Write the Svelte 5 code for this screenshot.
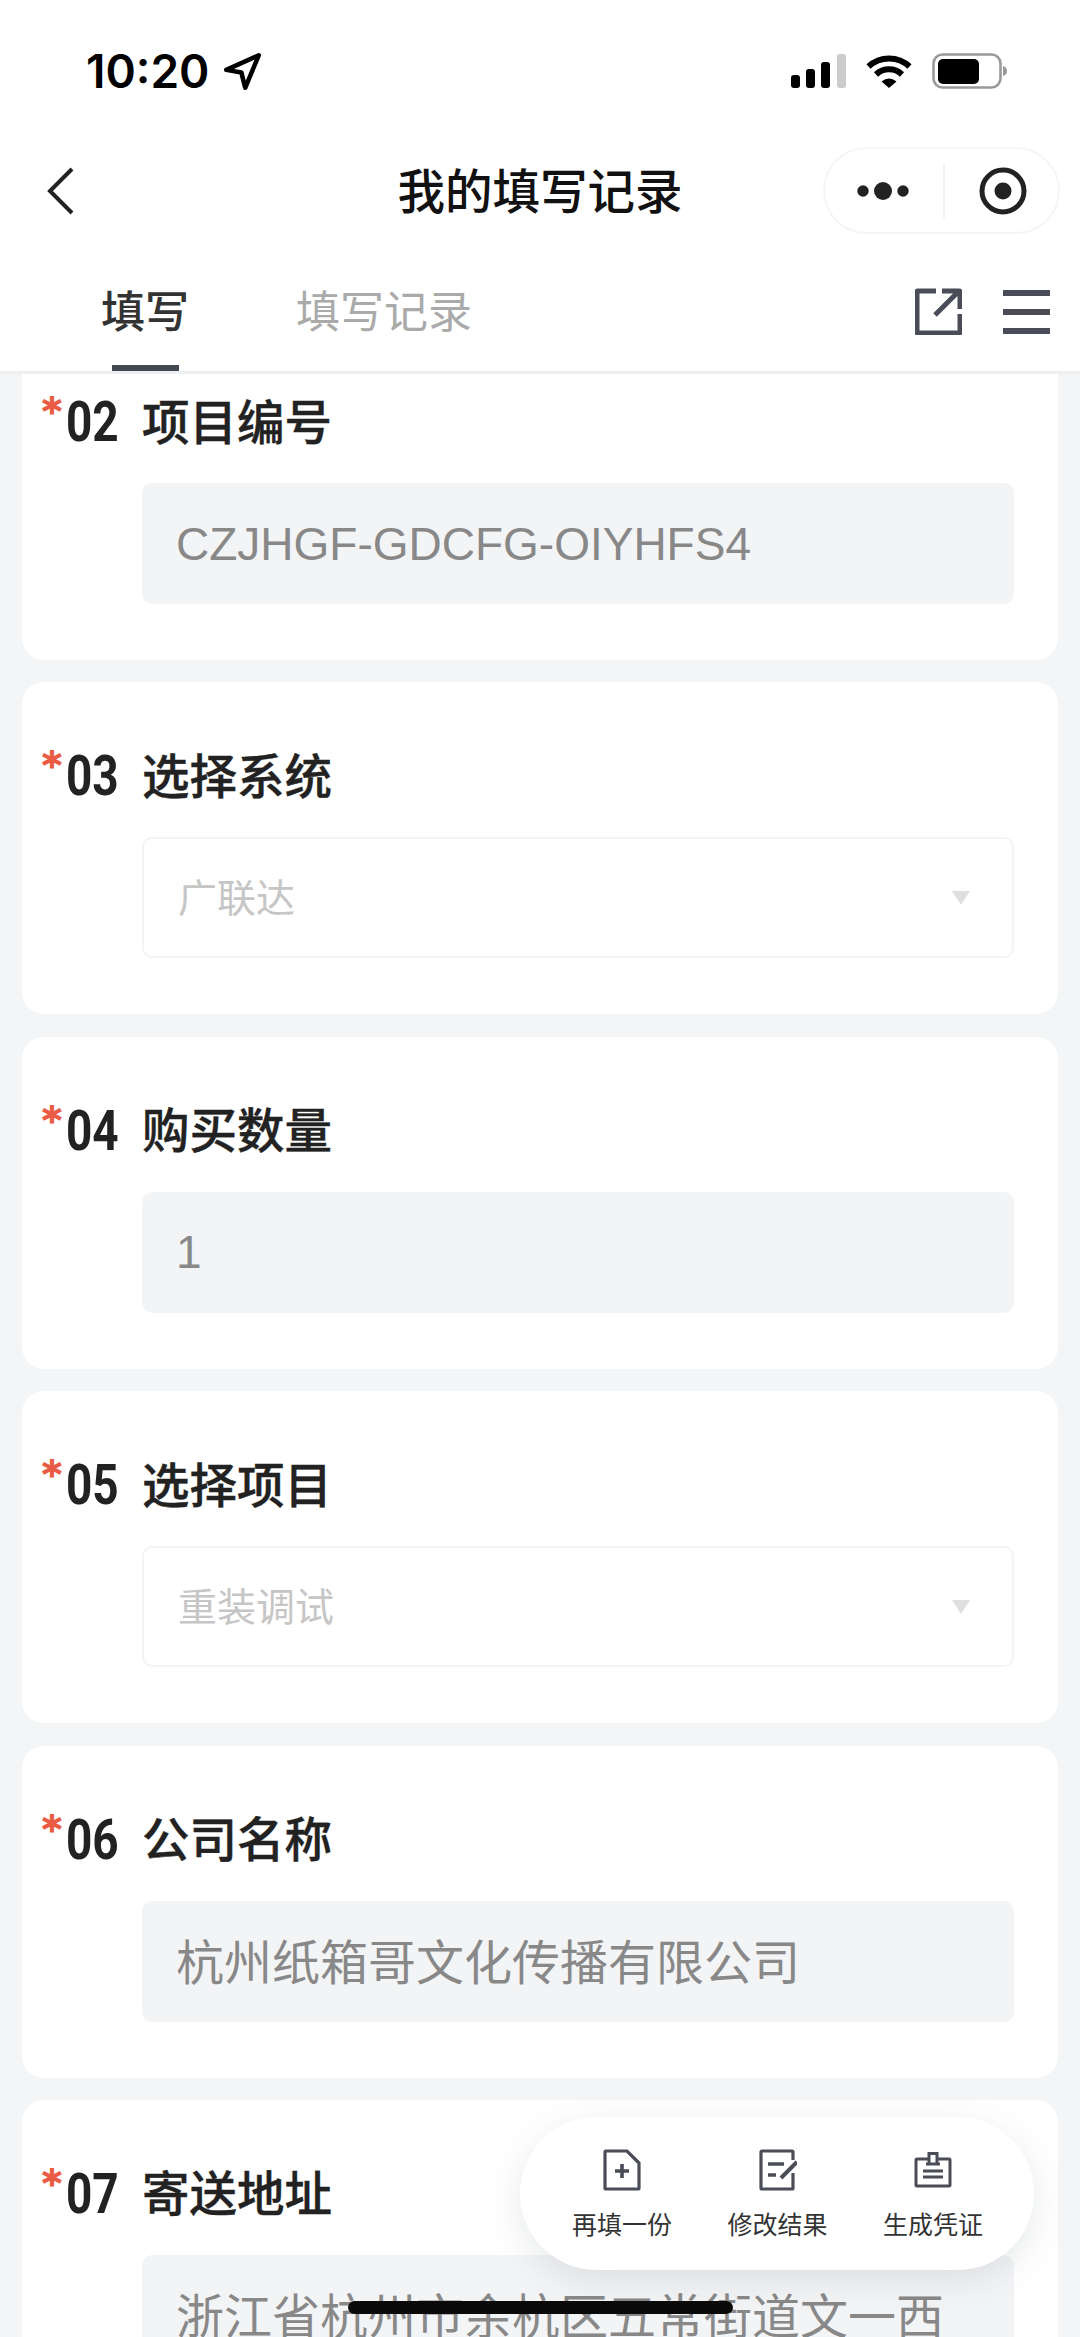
<script>
  const fields = [
    { no: '02', label: '项目编号', value: 'CZJHGF-GDCFG-OIYHFS4', type: 'input', latin: true },
    { no: '03', label: '选择系统', value: '广联达', type: 'select' },
    { no: '04', label: '购买数量', value: '1', type: 'input', latin: true },
    { no: '05', label: '选择项目', value: '重装调试', type: 'select' },
    { no: '06', label: '公司名称', value: '杭州纸箱哥文化传播有限公司', type: 'input' },
    { no: '07', label: '寄送地址', value: '浙江省杭州市余杭区五常街道文一西', type: 'input' }
  ];
</script>

<div class="page">
  <header class="top">
    <div class="status">
      <div class="time">
        <span>10:20</span>
        <svg width="39" height="39" viewBox="0 0 36 36" fill="none"><path d="M33 3 3 16.500l14 2.500 3.500 14z" stroke="#000" stroke-width="4.200" stroke-linejoin="round"/></svg>
      </div>
      <div class="sys">
        <svg width="55" height="34" viewBox="0 0 55 34"><rect x="0" y="21" width="9" height="13" rx="3"/><rect x="15" y="15" width="9" height="19" rx="3"/><rect x="30" y="8" width="9" height="26" rx="3"/><rect x="46" y="0" width="9" height="34" rx="3" fill="#ccc"/></svg>
        <svg width="46" height="34" viewBox="0 0 46 34" fill="none"><path d="M2.500 12.500a30 30 0 0 1 41 0" stroke="#000" stroke-width="6"/><path d="M10 20.500a19 19 0 0 1 26 0" stroke="#000" stroke-width="6"/><path d="M15.500 27.500q7.500-6 15 0L23 34z" fill="#000"/></svg>
        <svg width="75" height="36" viewBox="0 0 75 36" fill="none"><rect x="1.500" y="1.500" width="67" height="33" rx="9" stroke="#999" stroke-width="2.600"/><rect x="6" y="6" width="41" height="25" rx="5" fill="#000"/><path d="M71 13c3 .5 4 3 4 5s-1 4.500-4 5z" fill="#999"/></svg>
      </div>
    </div>

    <nav class="nav">
      <svg class="back" width="28" height="48" viewBox="0 0 28 48" fill="none"><path d="M25 2 3 24l22 22" stroke="#222" stroke-width="4"/></svg>
      <h1>我的填写记录</h1>
      <div class="capsule">
        <svg width="52" height="20" viewBox="0 0 52 20" fill="#222"><circle cx="6" cy="10" r="5.700"/><circle cx="26" cy="10" r="9"/><circle cx="46" cy="10" r="5.700"/></svg>
        <i class="sep"></i>
        <svg width="50" height="50" viewBox="0 0 50 50" fill="none"><circle cx="25" cy="25" r="21" stroke="#222" stroke-width="5"/><circle cx="25" cy="25" r="8.500" fill="#222"/></svg>
      </div>
    </nav>

    <div class="tabs">
      <div class="tab on">填写</div>
      <div class="tab">填写记录</div>
      <div class="tools">
        <svg width="47" height="47" viewBox="0 0 47 47" fill="none" stroke="#4a4d57" stroke-width="5"><path d="M21 3H3a1 1 0 0 0-1 1v40a1 1 0 0 0 1 1h41a1 1 0 0 0 1-1V26"/><path d="M20 27 43 4M27 3h17a1 1 0 0 1 1 1v17"/></svg>
        <svg width="47" height="47" viewBox="0 0 47 47" fill="#4a4d57"><rect y="2" width="47" height="6"/><rect y="21" width="47" height="6"/><rect y="40" width="47" height="6"/></svg>
      </div>
    </div>
  </header>

  <main class="form">
    {#each fields as f}
      <section class="card">
        <div class="label">
          <span class="star">*</span>
          <span class="no"><b>{f.no}</b></span>
          <span class="name">{f.label}</span>
        </div>
        {#if f.type === 'input'}
          <div class="field input" class:latin={f.latin}>{f.value}</div>
        {:else}
          <div class="field select">
            <span>{f.value}</span>
            <svg width="18" height="14" viewBox="0 0 18 14" fill="#dfdfdf"><path d="M0 0h18L9 14z"/></svg>
          </div>
        {/if}
      </section>
    {/each}
  </main>

  <div class="dock">
    <div class="act">
      <svg width="38" height="42" viewBox="0 0 38 42" fill="none" stroke="#4a4d57" stroke-width="3.200"><path d="M2 3a1 1 0 0 1 1-1h21l12 12v25a1 1 0 0 1-1 1H3a1 1 0 0 1-1-1z"/><path d="M12 22h14M19 15v14" stroke-width="3.600"/></svg>
      <span>再填一份</span>
    </div>
    <div class="act">
      <svg width="38" height="42" viewBox="0 0 38 42" fill="none" stroke="#4a4d57" stroke-width="3.200"><path d="M34 11V3a1 1 0 0 0-1-1H3a1 1 0 0 0-1 1v36a1 1 0 0 0 1 1h30a1 1 0 0 0 1-1V24"/><path d="M9 15h16M9 26h8" stroke-width="3.600"/><path d="M22 29 38 13" stroke-width="4"/></svg>
      <span>修改结果</span>
    </div>
    <div class="act">
      <svg width="38" height="42" viewBox="0 0 38 42" fill="none" stroke="#4a4d57" stroke-width="3"><path d="M15 10H3a1 1 0 0 0-1 1v25a1 1 0 0 0 1 1h32a1 1 0 0 0 1-1V11a1 1 0 0 0-1-1H23"/><path d="M15 14V4.500h8V14M12 15h14"/><path d="M9 22h20M9 28h20"/></svg>
      <span>生成凭证</span>
    </div>
  </div>

  <div class="home"></div>
</div>

<style>
  :global(body) { margin: 0; background: #f3f5f7; }
  .page {
    position: relative;
    width: 1080px;
    height: 2337px;
    overflow: hidden;
    background: #f3f5f7;
    font-family: "Noto Sans CJK SC", "Noto Sans", sans-serif;
  }
  .top { background: #fff; border-bottom: 3px solid #eeeff0; }

  .status {
    height: 142px;
    margin-bottom: 5px;
    padding: 0 73px 0 86px;
    display: flex;
    align-items: center;
    justify-content: space-between;
  }
  .time {
    display: flex;
    align-items: center;
    gap: 14px;
    font: 600 46px "Inter", sans-serif;
    color: #000;
  }
  .sys { display: flex; align-items: center; gap: 20px; }

  .nav {
    height: 87px;
    padding: 0 20px;
    display: grid;
    grid-template-columns: minmax(0, 1fr) auto minmax(0, 1fr);
    align-items: center;
  }
  .back { margin-left: 27px; }
  h1 { margin: -3px 0 0; font-size: 47.500px; font-weight: 500; color: #111; line-height: 60px; }
  .capsule {
    justify-self: end;
    width: 237px;
    height: 87px;
    box-sizing: border-box;
    border: 2px solid #f5f5f5;
    border-radius: 44px;
    display: flex;
    align-items: center;
    padding: 0 30px 0 32px;
    justify-content: space-between;
  }
  .sep { width: 2px; height: 54px; background: #f1f1f1; }

  .tabs {
    height: 137px;
    padding-left: 101px;
    display: flex;
    gap: 107px;
  }
  .tab {
    display: flex;
    flex-direction: column;
    align-items: center;
    padding-top: 44px;
    box-sizing: border-box;
    font-size: 44px;
    line-height: 62px;
    color: #aaa;
  }
  .tab.on { color: #333; font-weight: 500; }
  .tab.on::after {
    content: "";
    width: 67px;
    height: 6px;
    background: #434a54;
    margin-top: auto;
  }
  .tools {
    margin-left: auto;
    padding: 54px 30px 0 0;
    display: flex;
    gap: 41px;
    align-items: flex-start;
  }

  .form {
    height: 1963px;
    overflow: hidden;
    padding: 0 22px;
    display: flex;
    flex-direction: column;
    gap: 22.400px;
  }
  .card {
    flex: none;
    min-height: 332px;
    box-sizing: border-box;
    background: #fff;
    border-radius: 22px;
    padding: 64px 44px 56px 20px;
  }
  .card:first-child { margin-top: -46px; }

  .label {
    display: flex;
    align-items: center;
    height: 60px;
    margin-bottom: 31px;
    color: #222;
  }
  .star {
    width: 24px;
    align-self: flex-start;
    margin-top: -1px;
    font: 700 38px/40px "DejaVu Sans", sans-serif;
    -webkit-text-stroke: 1px #ea5b45;
    color: #ea5b45;
  }
  .no { width: 76px; flex: none; }
  .no b {
    display: inline-block;
    font: 700 56px/60px "Roboto", sans-serif;
    transform: scaleX(.82);
    transform-origin: left center;
  }
  .name { font-size: 47.500px; font-weight: 500; line-height: 60px; margin-top: -5px; -webkit-text-stroke: .4px #222; }

  .field {
    margin-left: 100px;
    height: 121px;
    box-sizing: border-box;
    border-radius: 10px;
    display: flex;
    align-items: center;
    white-space: nowrap;
    overflow: hidden;
  }
  .input {
    background: #f3f4f6;
    padding: 0 0 5px 34px;
    font-size: 48px;
    color: #888;
  }
  .input.latin { font-family: "Liberation Sans", sans-serif; font-size: 46px; padding-bottom: 0; }
  .select {
    background: #fff;
    border: 2px solid #f3f4f5;
    padding: 0 42px 0 34px;
    justify-content: space-between;
    font-size: 39px;
    color: #c6c6c6;
  }
  .select span { margin-bottom: 5px; }

  .dock {
    position: absolute;
    left: 520px;
    top: 2117px;
    width: 514px;
    height: 153px;
    box-sizing: border-box;
    padding: 32px 51px 0 52px;
    background: #fff;
    border-radius: 77px;
    box-shadow: 0 10px 36px rgba(60, 70, 80, .12);
    display: flex;
    justify-content: space-between;
  }
  .act {
    width: 100px;
    display: flex;
    flex-direction: column;
    align-items: center;
    gap: 14px;
    font-size: 25px;
    line-height: 36px;
    color: #333;
    white-space: nowrap;
  }
  .home {
    position: absolute;
    left: 348px;
    top: 2301px;
    width: 385px;
    height: 13px;
    border-radius: 7px;
    background: #0a0a0a;
  }
</style>
